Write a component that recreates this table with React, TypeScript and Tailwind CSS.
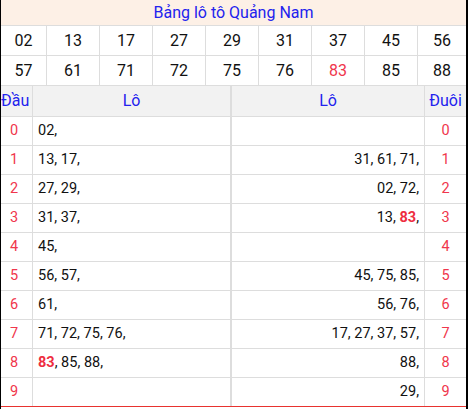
const row1 = ['02', '13', '17', '27', '29', '31', '37', '45', '56'];
const row2 = ['57', '61', '71', '72', '75', '76', '83', '85', '88'];
const special = ['83'];

const dau: string[][] = [
  ['02'], ['13', '17'], ['27', '29'], ['31', '37'], ['45'],
  ['56', '57'], ['61'], ['71', '72', '75', '76'], ['83', '85', '88'], [],
];
const duoi: string[][] = [
  [], ['31', '61', '71'], ['02', '72'], ['13', '83'], [],
  ['45', '75', '85'], ['56', '76'], ['17', '27', '37', '57'], ['88'], ['29'],
];

function NumList({ items }: { items: string[] }) {
  return (
    <>
      {items.map((n, i) => (
        <span key={n}>
          {special.includes(n) ? <b className="font-bold text-[#ee2d3f]">{n}</b> : n}
          ,{i < items.length - 1 ? ' ' : ''}
        </span>
      ))}
    </>
  );
}

function NumRow({ nums }: { nums: string[] }) {
  return (
    <div className="grid grid-cols-[46px_repeat(7,53px)_1fr] h-[30px] border-b border-[#dddddd]">
      {nums.map((n, i) => (
        <div
          key={n}
          className={`flex items-center justify-center ${i < 8 ? 'border-r border-[#dddddd]' : ''} ${
            special.includes(n) ? 'text-[#f0364c]' : 'text-[#111]'
          }`}
        >
          {n}
        </div>
      ))}
    </div>
  );
}

export default function App() {
  return (
    <div
      className="w-[468px] h-[409px] overflow-hidden bg-white border-l border-r-2 border-black flex flex-col"
      style={{ fontFamily: 'Roboto, "Liberation Sans", sans-serif' }}
    >
      <div className="h-[26px] shrink-0 bg-[#fdf0e6] border-b border-[#dddddd] text-center text-[16px] leading-[25px] text-[#2222ee]">
        Bảng lô tô Quảng Nam
      </div>

      <div className="text-[16px]">
        <NumRow nums={row1} />
        <NumRow nums={row2} />
      </div>

      <div className="grid grid-cols-[32px_199px_193px_1fr] h-[31px] shrink-0 bg-[#f2f2f2] border-b border-[#dddddd] text-[16px] text-[#2222ee]">
        <div className="flex items-center border-r border-[#dddddd]">Đầu</div>
        <div className="flex items-center justify-center border-r-2 border-[#dddddd]">Lô</div>
        <div className="flex items-center justify-center border-r border-[#dddddd]">Lô</div>
        <div className="flex items-center justify-center">Đuôi</div>
      </div>

      <div className="flex flex-col text-[14.5px] text-[#111]">
        {dau.map((d, i) => (
          <div
            key={i}
            className={`grid grid-cols-[32px_199px_193px_1fr] h-[29px] border-b ${
              i === 9 ? 'border-[#e8332f]' : 'border-[#dddddd]'
            }`}
          >
            <div className="flex items-center pl-[9px] border-r border-[#dddddd] text-[#f0364c]">{i}</div>
            <div className="flex items-center pl-[5px] border-r-2 border-[#dddddd] whitespace-pre">
              <NumList items={d} />
            </div>
            <div className="flex items-center justify-end pr-[5px] border-r border-[#dddddd] whitespace-pre">
              <NumList items={duoi[i]} />
            </div>
            <div className="flex items-center justify-center text-[#f0364c]">{i}</div>
          </div>
        ))}
      </div>
    </div>
  );
}
